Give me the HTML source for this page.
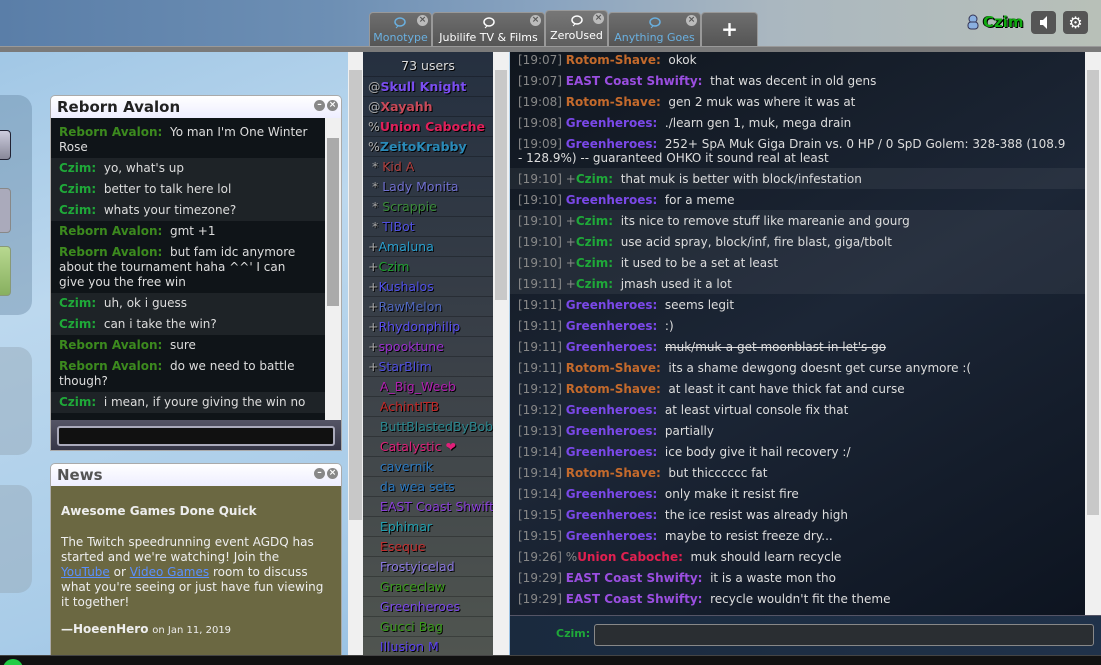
<!DOCTYPE html>
<html><head><meta charset="utf-8">
<style>
*{box-sizing:border-box;margin:0;padding:0}
html,body{width:1101px;height:665px;overflow:hidden}
body{position:relative;font-family:"DejaVu Sans","Liberation Sans",sans-serif;font-size:11px;background:linear-gradient(160deg,#9cc4e4 0%,#bcd8ee 30%,#a9cce8 60%,#7fb0dc 100%);}
.hdr{position:absolute;left:0;top:0;width:1101px;height:46px;background:linear-gradient(90deg,#5a7ea8 0%,#6d8fb4 30%,#8aa4c0 50%,#aab7c0 70%,#b8c0b8 100%);}
.gbar{position:absolute;left:0;top:46px;width:1101px;height:6px;background:#7a7a7a;border-top:1px solid #999}
.tab{position:absolute;top:12px;height:34px;background:linear-gradient(#6e6e6e,#555);border:1px solid #999;border-bottom:none;border-radius:4px 4px 0 0;color:#fff;font-size:11px;text-align:center}
.tab .l{position:absolute;bottom:2px;left:0;right:0}
.tab .x{position:absolute;top:2px;right:3px;width:11px;height:11px;border-radius:50%;background:#bbb;color:#555;font-size:9px;line-height:11px;font-weight:bold}
.tab svg{position:absolute;top:4px;left:50%;margin-left:-7px}
.panel{position:absolute;border-radius:14px;background:rgba(90,120,150,.35)}
.win{position:absolute;left:50px;width:292px;border:1px solid #aaa;border-radius:5px 5px 0 0;overflow:hidden}
.wt{height:22px;background:linear-gradient(#fff,#eef);font-weight:bold;font-size:15px;padding:2px 6px;color:#222;position:relative}
.wt .b{position:absolute;top:4px;width:11px;height:11px;border-radius:50%;background:#888;color:#fff;font-size:9px;line-height:11px;text-align:center}
.pm{background:#0f1418;position:relative;height:302px;overflow:hidden;padding-top:4px}
.pm .m{padding:3px 20px 3px 8px;line-height:15px;color:#ddd;font-size:12px}
.pm .a{background:#1e2327}
.g{color:#3c8a1e;font-weight:bold}
.cz{color:#1fa839;font-weight:bold}
.sb{position:absolute;background:#f0f0f0}
.ul{position:absolute;left:363px;top:52px;width:130px;height:603px;background:linear-gradient(#253040,#3a4048 50%,#505550);overflow:hidden}
.ul div{height:20px;line-height:20px;padding-left:5px;border-bottom:1px solid rgba(0,0,0,.25);font-size:12.5px;white-space:nowrap;color:#aaa;text-shadow:1px 1px 0 #000}
.ul b{font-weight:bold}
.chat{position:absolute;left:510px;top:52px;width:575px;height:563px;background:linear-gradient(150deg,#10161e,#1c2636 50%,#0d1420);overflow:hidden}
.chat .m{padding:3.5px 8px;line-height:14px;color:#ddd;font-size:12px}
.chat .a{background:rgba(255,255,255,.06)}
.t{color:#888}
.ro{color:#c46a2c;font-weight:bold}
.ea{color:#9a4ee0;font-weight:bold}
.gr{color:#7a48e8;font-weight:bold}
.uc{color:#e02050;font-weight:bold}
</style></head><body>
<div class="hdr"></div>
<div class="gbar"></div>

<div class="tab" style="left:369px;width:63px"><svg width="14" height="12"><ellipse cx="6" cy="5" rx="5" ry="4" fill="none" stroke="#6ab0e0" stroke-width="1.5"/><path d="M4 9l-2 2" stroke="#6ab0e0"/></svg><span class="x">×</span><span class="l" style="color:#6ab0e0">Monotype</span></div>
<div class="tab" style="left:432px;width:113px"><svg width="14" height="12"><ellipse cx="7" cy="5" rx="5" ry="4" fill="none" stroke="#fff" stroke-width="1.5"/><path d="M5 9l-2 2" stroke="#fff"/></svg><span class="x">×</span><span class="l">Jubilife TV &amp; Films</span></div>
<div class="tab" style="left:545px;top:10px;height:36px;width:63px;background:linear-gradient(#777,#5e5e5e)"><svg width="14" height="12"><ellipse cx="7" cy="5" rx="5" ry="4" fill="none" stroke="#fff" stroke-width="1.5"/><path d="M5 9l-2 2" stroke="#fff"/></svg><span class="x">×</span><span class="l" style="bottom:4px">ZeroUsed</span></div>
<div class="tab" style="left:608px;width:93px"><svg width="14" height="12"><ellipse cx="7" cy="5" rx="5" ry="4" fill="none" stroke="#6ab0e0" stroke-width="1.5"/><path d="M5 9l-2 2" stroke="#6ab0e0"/></svg><span class="x">×</span><span class="l" style="color:#6ab0e0">Anything Goes</span></div>
<div class="tab" style="left:701px;width:57px"><span style="position:absolute;left:0;right:0;top:4px;font-size:20px;font-weight:bold">+</span></div>

<svg style="position:absolute;left:967px;top:14px" width="12" height="16"><circle cx="6" cy="5" r="4" fill="#8ab0e0" stroke="#335"/><rect x="1" y="8" width="10" height="7" rx="3" fill="#8ab0e0" stroke="#335"/></svg>
<div style="position:absolute;left:983px;top:13px;font-size:15px;font-weight:bold;color:#1a1;text-shadow:1px 1px 0 #000,-1px 0 0 #000">Czim</div>
<div style="position:absolute;left:1031px;top:11px;width:25px;height:23px;border-radius:4px;background:#555"><svg width="25" height="23"><path d="M9 9h3l4-4v13l-4-4H9z" fill="#fff"/></svg></div>
<div style="position:absolute;left:1063px;top:11px;width:25px;height:23px;border-radius:4px;background:#555;color:#fff;font-size:16px;text-align:center;line-height:23px">⚙</div>

<div class="panel" style="left:-20px;top:95px;width:52px;height:220px"></div>
<div style="position:absolute;left:-10px;top:130px;width:21px;height:30px;border-radius:4px;background:linear-gradient(#ccd,#889);border:1px solid #223"></div>
<div style="position:absolute;left:-10px;top:188px;width:21px;height:45px;border-radius:4px;background:#aab;border:1px solid #888"></div>
<div style="position:absolute;left:-10px;top:246px;width:21px;height:50px;border-radius:4px;background:linear-gradient(#b8d890,#88b060);border:1px solid #897"></div>
<div class="panel" style="left:-20px;top:347px;width:52px;height:108px;background:rgba(150,170,185,.5)"></div>
<div class="panel" style="left:-20px;top:485px;width:52px;height:108px;background:rgba(150,170,185,.5)"></div>

<div class="win" style="top:95px;height:356px">
<div class="wt">Reborn Avalon<span class="b" style="right:16px">–</span><span class="b" style="right:3px">×</span></div>
<div class="pm">
<div class="m"><span class="g">Reborn Avalon:</span>&nbsp; Yo man I'm One Winter Rose</div>
<div class="m a"><span class="cz">Czim:</span>&nbsp; yo, what's up</div>
<div class="m a"><span class="cz">Czim:</span>&nbsp; better to talk here lol</div>
<div class="m a"><span class="cz">Czim:</span>&nbsp; whats your timezone?</div>
<div class="m"><span class="g">Reborn Avalon:</span>&nbsp; gmt +1</div>
<div class="m"><span class="g">Reborn Avalon:</span>&nbsp; but fam idc anymore about the tournament haha ^^' I can<br>give you the free win</div>
<div class="m a"><span class="cz">Czim:</span>&nbsp; uh, ok i guess</div>
<div class="m a"><span class="cz">Czim:</span>&nbsp; can i take the win?</div>
<div class="m"><span class="g">Reborn Avalon:</span>&nbsp; sure</div>
<div class="m"><span class="g">Reborn Avalon:</span>&nbsp; do we need to battle though?</div>
<div class="m a"><span class="cz">Czim:</span>&nbsp; i mean, if youre giving the win no</div>
<div style="position:absolute;right:0;top:0;width:16px;height:302px;background:#f0f0f0"><div style="margin:20px 2px;height:168px;background:#aaa"></div></div>
</div>
<div style="height:32px;background:linear-gradient(#556,#334);padding:6px 6px"><div style="height:20px;background:#111;border:2px solid #aab;border-radius:3px"></div></div>
</div>

<div class="win" style="top:463px;height:200px">
<div class="wt" style="color:#555">News<span class="b" style="right:16px">–</span><span class="b" style="right:3px">×</span></div>
<div style="background:#6b6842;height:170px;padding:18px 10px;color:#eee;font-size:12px;line-height:15px;border-bottom:1px solid #999">
<div style="font-weight:bold;margin-bottom:16px">Awesome Games Done Quick</div>
<div>The Twitch speedrunning event AGDQ has started and we're watching! Join the <u style="color:#5a90ff">YouTube</u> or <u style="color:#5a90ff">Video Games</u> room to discuss what you're seeing or just have fun viewing it together!</div>
<div style="margin-top:12px"><b>—HoeenHero</b> <span style="font-size:10px">on Jan 11, 2019</span></div>
</div></div>

<div class="sb" style="left:348px;top:52px;width:15px;height:603px"><div style="margin:18px 1px;height:450px;background:#c8c8c8"></div></div>
<div class="ul">
<div style="text-align:center;color:#ddd;padding:0;height:25px;line-height:27px">73 users</div>
<div>@<b style="color:#7a4ef0">Skull Knight</b></div>
<div>@<b style="color:#c84a5a">Xayahh</b></div>
<div>%<b style="color:#e0205a">Union Caboche</b></div>
<div>%<b style="color:#2a8ab8">ZeitoKrabby</b></div>
<div>&nbsp;*&nbsp;<span style="color:#b04040">Kid A</span></div>
<div>&nbsp;*&nbsp;<span style="color:#7070d0">Lady Monita</span></div>
<div>&nbsp;*&nbsp;<span style="color:#3a8a3a">Scrappie</span></div>
<div>&nbsp;*&nbsp;<span style="color:#5050e0">TIBot</span></div>
<div>+<span style="color:#2aa0d0">Amaluna</span></div>
<div>+<span style="color:#20a030">Czim</span></div>
<div>+<span style="color:#5050e8">Kushalos</span></div>
<div>+<span style="color:#5068c0">RawMelon</span></div>
<div>+<span style="color:#5a50f0">Rhydonphilip</span></div>
<div>+<span style="color:#9a30d0">spooktune</span></div>
<div>+<span style="color:#5050e0">StarBlim</span></div>
<div>&nbsp;&nbsp;&nbsp;<span style="color:#b020b0">A_Big_Weeb</span></div>
<div>&nbsp;&nbsp;&nbsp;<span style="color:#c02828">AchintITB</span></div>
<div>&nbsp;&nbsp;&nbsp;<span style="color:#2a8890">ButtBlastedByBobby</span></div>
<div>&nbsp;&nbsp;&nbsp;<span style="color:#e0207a">Catalystic ❤</span></div>
<div>&nbsp;&nbsp;&nbsp;<span style="color:#2a78c0">cavernik</span></div>
<div>&nbsp;&nbsp;&nbsp;<span style="color:#2a78c0">da wea sets</span></div>
<div>&nbsp;&nbsp;&nbsp;<span style="color:#8a40d8">EAST Coast Shwifty</span></div>
<div>&nbsp;&nbsp;&nbsp;<span style="color:#20a0b0">Ephimar</span></div>
<div>&nbsp;&nbsp;&nbsp;<span style="color:#c03030">Eseque</span></div>
<div>&nbsp;&nbsp;&nbsp;<span style="color:#8a78e0">Frostyicelad</span></div>
<div>&nbsp;&nbsp;&nbsp;<span style="color:#3a9a1a">Graceclaw</span></div>
<div>&nbsp;&nbsp;&nbsp;<span style="color:#7a48e8">Greenheroes</span></div>
<div>&nbsp;&nbsp;&nbsp;<span style="color:#3a9a1a">Gucci Bag</span></div>
<div>&nbsp;&nbsp;&nbsp;<span style="color:#5a40f0">Illusion M</span></div>
</div>
<div class="sb" style="left:493px;top:52px;width:16px;height:603px"><div style="margin:18px 2px;height:230px;background:#c8c8c8"></div></div>

<div class="chat"><div style="margin-top:-3px">
<div class="m"><span class="t">[19:07]</span> <span class="ro">Rotom-Shave:</span>&nbsp; okok</div>
<div class="m"><span class="t">[19:07]</span> <span class="ea">EAST Coast Shwifty:</span>&nbsp; that was decent in old gens</div>
<div class="m"><span class="t">[19:08]</span> <span class="ro">Rotom-Shave:</span>&nbsp; gen 2 muk was where it was at</div>
<div class="m"><span class="t">[19:08]</span> <span class="gr">Greenheroes:</span>&nbsp; ./learn gen 1, muk, mega drain</div>
<div class="m"><span class="t">[19:09]</span> <span class="gr">Greenheroes:</span>&nbsp; 252+ SpA Muk Giga Drain vs. 0 HP / 0 SpD Golem: 328-388 (108.9<br>- 128.9%) -- guaranteed OHKO it sound real at least</div>
<div class="m a"><span class="t">[19:10]</span> <span class="t">+</span><span class="cz">Czim:</span>&nbsp; that muk is better with block/infestation</div>
<div class="m"><span class="t">[19:10]</span> <span class="gr">Greenheroes:</span>&nbsp; for a meme</div>
<div class="m a"><span class="t">[19:10]</span> <span class="t">+</span><span class="cz">Czim:</span>&nbsp; its nice to remove stuff like mareanie and gourg</div>
<div class="m a"><span class="t">[19:10]</span> <span class="t">+</span><span class="cz">Czim:</span>&nbsp; use acid spray, block/inf, fire blast, giga/tbolt</div>
<div class="m a"><span class="t">[19:10]</span> <span class="t">+</span><span class="cz">Czim:</span>&nbsp; it used to be a set at least</div>
<div class="m a"><span class="t">[19:11]</span> <span class="t">+</span><span class="cz">Czim:</span>&nbsp; jmash used it a lot</div>
<div class="m"><span class="t">[19:11]</span> <span class="gr">Greenheroes:</span>&nbsp; seems legit</div>
<div class="m"><span class="t">[19:11]</span> <span class="gr">Greenheroes:</span>&nbsp; :)</div>
<div class="m"><span class="t">[19:11]</span> <span class="gr">Greenheroes:</span>&nbsp; <s>muk/muk-a get moonblast in let's go</s></div>
<div class="m"><span class="t">[19:11]</span> <span class="ro">Rotom-Shave:</span>&nbsp; its a shame dewgong doesnt get curse anymore :(</div>
<div class="m"><span class="t">[19:12]</span> <span class="ro">Rotom-Shave:</span>&nbsp; at least it cant have thick fat and curse</div>
<div class="m"><span class="t">[19:12]</span> <span class="gr">Greenheroes:</span>&nbsp; at least virtual console fix that</div>
<div class="m"><span class="t">[19:13]</span> <span class="gr">Greenheroes:</span>&nbsp; partially</div>
<div class="m"><span class="t">[19:14]</span> <span class="gr">Greenheroes:</span>&nbsp; ice body give it hail recovery :/</div>
<div class="m"><span class="t">[19:14]</span> <span class="ro">Rotom-Shave:</span>&nbsp; but thicccccc fat</div>
<div class="m"><span class="t">[19:14]</span> <span class="gr">Greenheroes:</span>&nbsp; only make it resist fire</div>
<div class="m"><span class="t">[19:15]</span> <span class="gr">Greenheroes:</span>&nbsp; the ice resist was already high</div>
<div class="m"><span class="t">[19:15]</span> <span class="gr">Greenheroes:</span>&nbsp; maybe to resist freeze dry...</div>
<div class="m"><span class="t">[19:26]</span> <span class="t">%</span><span class="uc">Union Caboche:</span>&nbsp; muk should learn recycle</div>
<div class="m"><span class="t">[19:29]</span> <span class="ea">EAST Coast Shwifty:</span>&nbsp; it is a waste mon tho</div>
<div class="m"><span class="t">[19:29]</span> <span class="ea">EAST Coast Shwifty:</span>&nbsp; recycle wouldn't fit the theme</div>
</div></div>
<div class="sb" style="left:1085px;top:52px;width:16px;height:563px"><div style="margin:18px 2px;height:445px;background:#c8c8c8"></div></div>
<div style="position:absolute;left:510px;top:615px;width:591px;height:40px;background:linear-gradient(90deg,#1a2a3e,#20324a);border-top:1px solid #556">
<span style="position:absolute;left:46px;top:11px;color:#1fa839;font-weight:bold;font-size:11px">Czim:</span>
<div style="position:absolute;left:84px;top:8px;width:500px;height:22px;background:#2a2e32;border:1px solid #888;border-radius:3px"></div>
</div>
<div style="position:absolute;left:0;top:655px;width:1101px;height:10px;background:#111;border-top:1px solid #444;overflow:hidden"><div style="position:absolute;left:3px;top:3px;width:20px;height:20px;border-radius:50%;background:#2c4"></div></div>
</body></html>
